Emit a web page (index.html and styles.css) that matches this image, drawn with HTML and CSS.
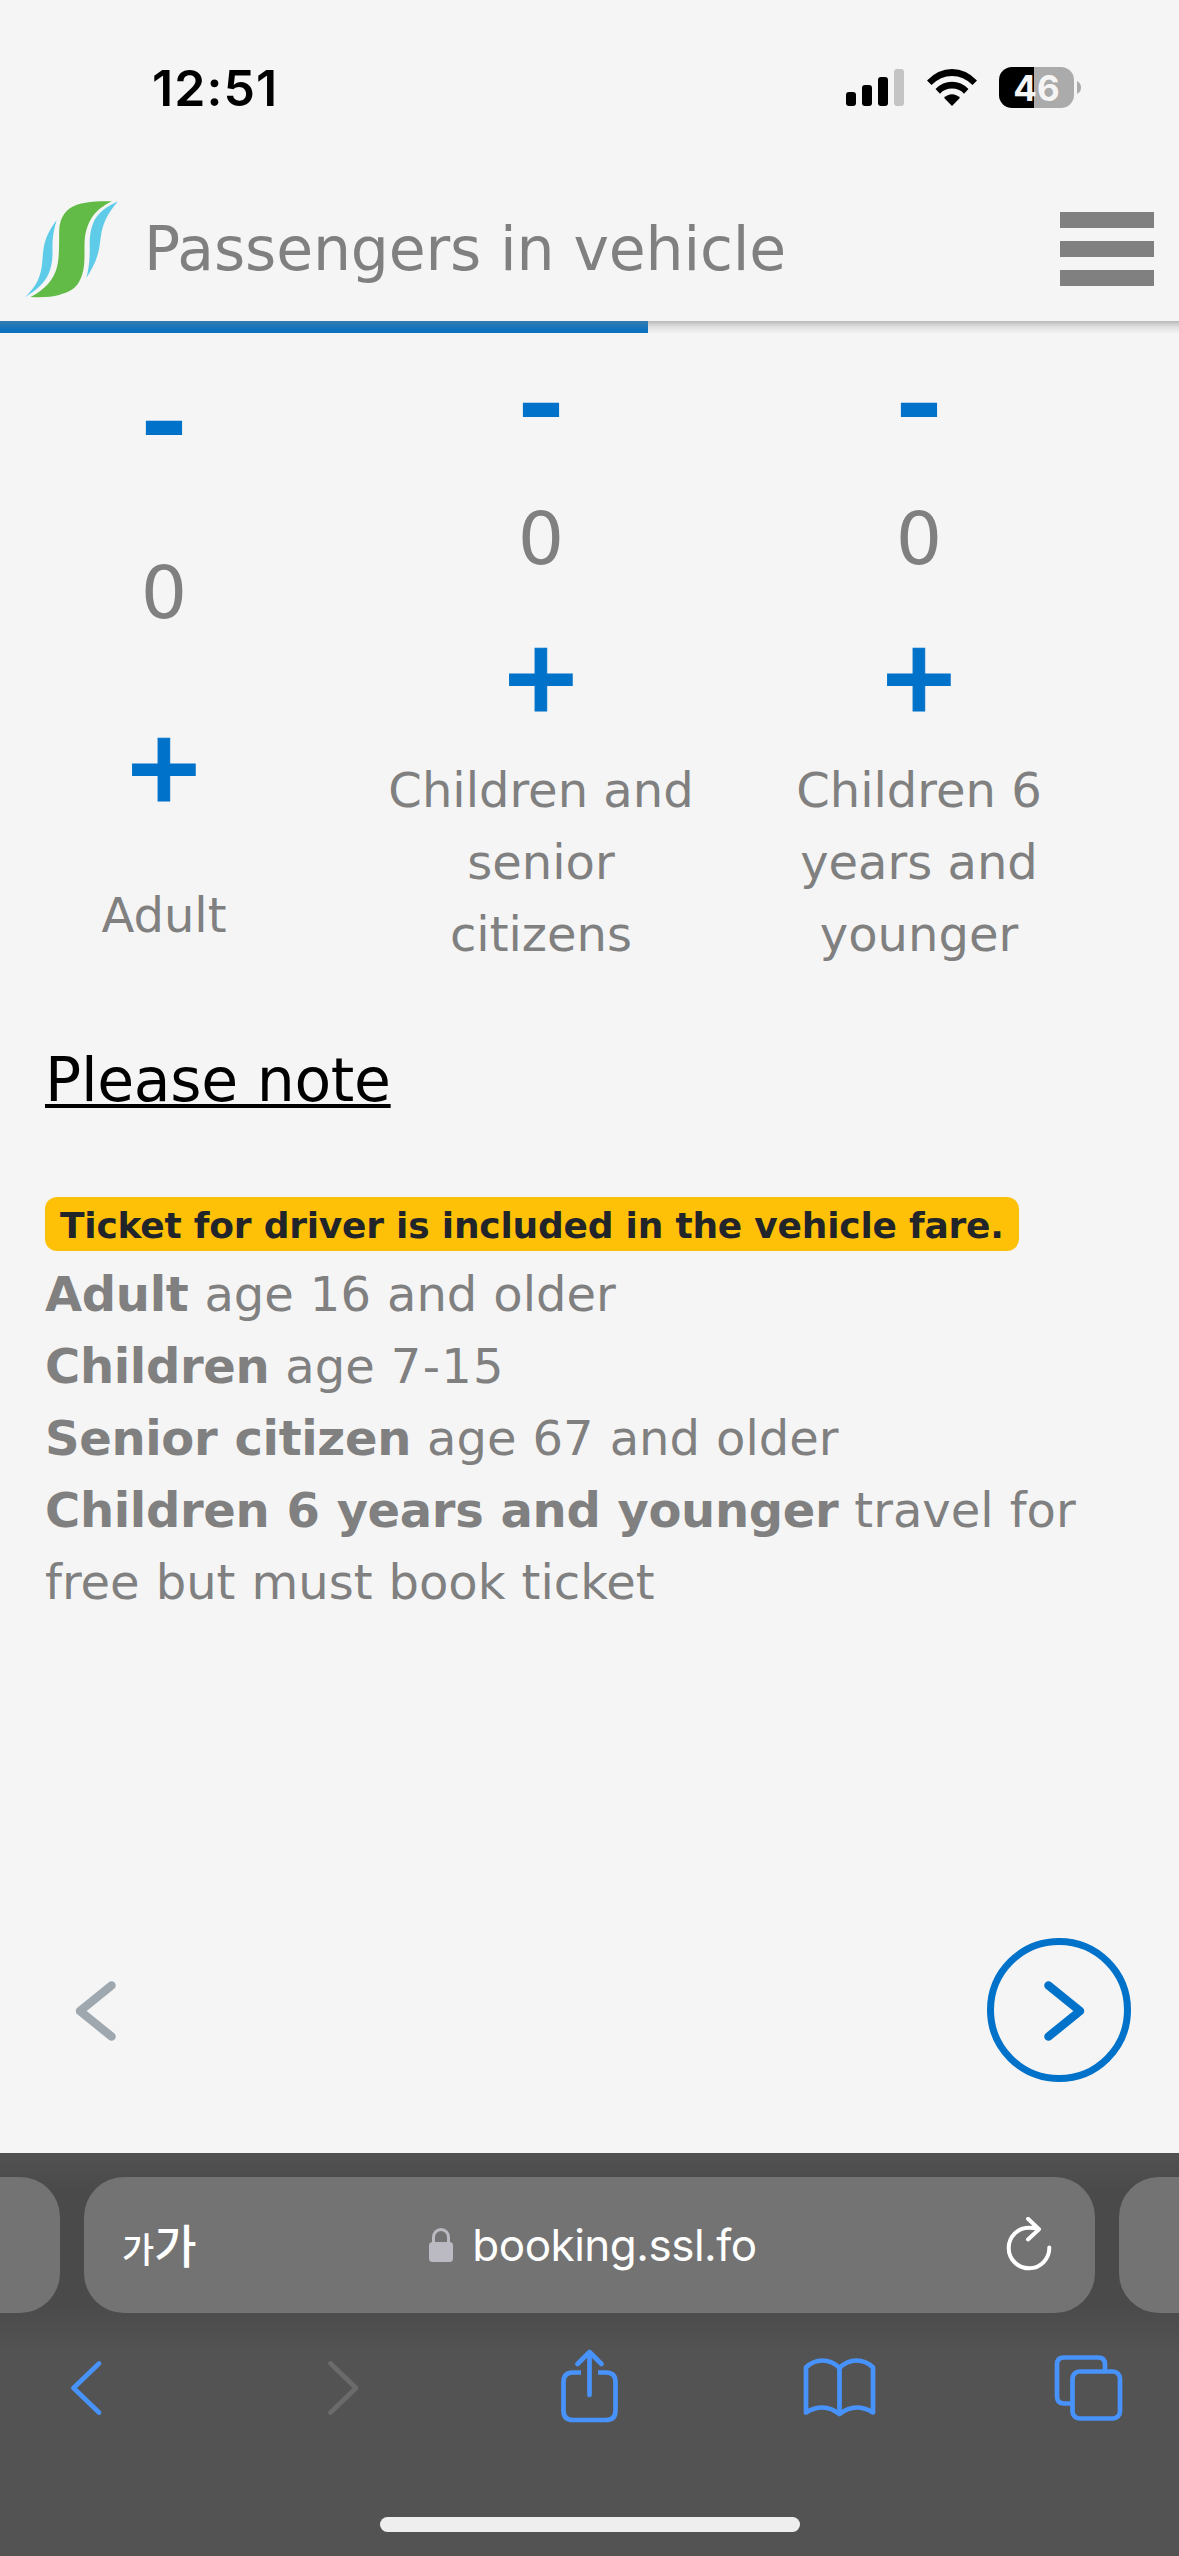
FILE: index.html
```html
<!DOCTYPE html>
<html lang="en">
<head>
<meta charset="utf-8">
<title>Passengers in vehicle</title>
<link rel="stylesheet" href="styles.css">
</head>
<body>
<div class="screen">
  <div class="status">
    <span class="clock">12:51</span>
    <div class="status-icons">
      <svg class="signal" viewBox="0 0 58 37"><rect x="0" y="23" width="10" height="14" rx="3"/><rect x="16" y="16" width="10" height="21" rx="3"/><rect x="32" y="8" width="10" height="29" rx="3"/><rect x="48" y="0" width="10" height="37" rx="3" fill="#c4c4c4"/></svg>
      <svg class="wifi" viewBox="0 0 50 37"><path d="M0 11.5Q11 0 25 0T50 11.5L45.500 16Q36.500 7 25 7T4.500 16Z"/><path d="M8.500 20Q15.500 12.700 25 12.700T41.500 20L37 24.700Q32 19.600 25 19.600T13 24.700Z"/><path d="M17 28.700Q20.500 25.200 25 25.200T33 28.700L25 37Z"/></svg>
      <div class="battery"><span>46</span></div>
      <svg class="nub" viewBox="0 0 4 13"><path d="M0 0Q4 2 4 6.500T0 13Z" fill="#ababab"/></svg>
    </div>
  </div>
  <header class="header">
    <svg class="logo" viewBox="0 0 94 97"><path fill="#62bb46" d="M87 .3C66 0 54 2 47 6C38 11 34.400 20 34.200 30C34 44 34.500 56 32 66C29 78 20 89 5.400 96C18 96.500 27 96 34 94C44 91 50 88 54 81C58 74 59.500 66 59.500 54C59.500 40 59 31 65.400 19C70 11 77 5 87 .3Z"/><path fill="#5ecbe9" d="M31.700 19C24 29 20 38 18.500 48C17 57 18 69 12.500 80C9 87 5 91 .4 96C12 89 20 81 23.500 73C27 65 27.700 58 27.500 48C27.300 36 29 28 31.700 19ZM93 .4C82 5 74 11 69.500 19C65.500 27 64.500 36 64.700 44C65 57 64 67 61.400 77C67 68 72 59 74 48C76 39 75 32 80 20C83 13 87 7 93 .4Z"/></svg>
    <h1 class="title">Passengers in vehicle</h1>
    <div class="menu"><i></i><i></i><i></i></div>
  </header>
  <div class="progress"><div class="progress-fill"></div></div>

  <main class="main">
    <section class="counters">
      <div class="counter counter-tall">
        <span class="minus">-</span><span class="count">0</span><span class="plus">+</span><span class="label">Adult</span>
      </div>
      <div class="counter">
        <span class="minus">-</span><span class="count">0</span><span class="plus">+</span><span class="label">Children and senior citizens</span>
      </div>
      <div class="counter">
        <span class="minus">-</span><span class="count">0</span><span class="plus">+</span><span class="label">Children 6 years and younger</span>
      </div>
    </section>

    <section class="notes">
      <h2 class="notes-title">Please note</h2>
      <div class="badge">Ticket for driver is included in the vehicle fare.</div>
      <p class="rules"><b>Adult</b> age 16 and older<br><b>Children</b> age <span class="range">7-15</span><br><b>Senior citizen</b> age 67 and older<br><b>Children 6 years and younger</b> travel for<br>free but must book ticket</p>
    </section>

    <nav class="steps">
      <svg class="prev" viewBox="0 0 41 60"><path d="M36.500 4.500L5 30L36.500 55.500"/></svg>
      <div class="next"><svg viewBox="0 0 41 60"><path d="M4.500 4.500L36 30L4.500 55.500"/></svg></div>
    </nav>
  </main>

  <footer class="browser">
    <div class="tabs-row">
      <div class="tab-edge tab-left"></div>
      <div class="address">
        <span class="reader"><small>가</small>가</span>
        <div class="url">
          <svg class="lock" viewBox="0 0 24 34"><rect y="14" width="24" height="20" rx="3.500" fill="#bbb9c2"/><path d="M4.500 16V9.500a7.500 8 0 0 1 15 0V16" fill="none" stroke="#bbb9c2" stroke-width="3"/></svg>
          <span>booking.ssl.fo</span>
        </div>
        <svg class="reload" viewBox="0 0 46 56"><path d="M43.300 30.500A20.300 20.300 0 1 1 23 10.700Q28 10.700 32.500 12M22 1.800L33 12.200L22 22.500"/></svg>
      </div>
      <div class="tab-edge tab-right"></div>
    </div>
    <div class="toolbar">
      <svg viewBox="0 0 80 80"><path d="M49 23.500L23.500 48L49 72.500"/></svg>
      <svg class="off" viewBox="0 0 80 80"><path d="M30.500 23.500L56 48L30.500 72.500"/></svg>
      <svg viewBox="0 0 80 80"><path stroke-linecap="butt" d="M31 32.500H23q-9.500 0-9.500 9.500V70.500q0 9.500 9.500 9.500H56q9.500 0 9.500-9.500V42q0-9.500-9.500-9.500H48"/><path d="M39.500 55V13M27.500 24L39.500 12L51.500 24"/></svg>
      <svg viewBox="0 0 80 80"><path d="M39.500 74V28M6 72.500V27.500Q13 20.500 22.500 20.500T39.500 28Q47 20.500 56.500 20.500T73 27.500V72.500Q65 67.500 56.500 67.500T39.500 74Q31 67.500 22.500 67.500T6 72.500Z"/></svg>
      <svg viewBox="0 0 80 80"><path d="M20 63.500H14q-7 0-7-7V24.500q0-7 7-7H48q7 0 7 7V31"/><rect x="22.500" y="31.500" width="47.500" height="47" rx="7"/></svg>
    </div>
    <div class="home"></div>
  </footer>
</div>
</body>
</html>
```
FILE: styles.css
```css
* { box-sizing: border-box; }
body { margin: 0; background: #f5f5f5; }
.screen {
  width: 1179px; height: 2556px; overflow: hidden;
  display: flex; flex-direction: column;
  font-family: "DejaVu Sans", Verdana, sans-serif;
  font-size: 48px; color: #808080; background: #f5f5f5;
}
svg { display: block; flex: none; }

.status { height: 176px; display: flex; justify-content: space-between; padding: 67px 98px 0 152px; }
.clock { font: 600 50px/42px Inter, sans-serif; color: #000; letter-spacing: 1.1px; }
.status-icons { display: flex; height: 41px; align-items: center; }
.signal { width: 58px; height: 37px; margin-right: 22.500px; }
.wifi { width: 50px; height: 37px; margin-right: 22.500px; }
.battery {
  width: 75px; height: 41px; border-radius: 13px;
  background: linear-gradient(90deg, #000 35px, #ababab 35px);
  font: 700 35px/42px Inter, sans-serif; color: #f5f5f5; text-align: center;
}
.nub { width: 4px; height: 13px; margin-left: 3px; }

.header { height: 145px; display: flex; align-items: flex-start; padding: 25px 25px 0; }
.logo { width: 94px; height: 97px; }
.title { margin: 12px 0 0 25px; font-size: 60px; line-height: 72px; font-weight: 400; letter-spacing: -0.15px; flex: 1; white-space: nowrap; }
.menu { width: 94px; display: flex; flex-direction: column; gap: 13px; padding-top: 11px; }
.menu i { height: 16px; background: #808080; }
.progress { height: 12px; background: linear-gradient(#b9bab9, #e0e0e0 50%, #f2f2f2); flex: none; }
.progress-fill { width: 648px; height: 12px; background: linear-gradient(#377cb0, #0f72be 70%, #0d71c0); }

.main { flex: 1; display: flex; flex-direction: column; min-height: 0; }
.counters { display: grid; grid-template-columns: 328px 426px 330px; height: 680px; padding-top: 19px; }
.counter { display: flex; flex-direction: column; align-items: center; }
.minus, .plus { font-weight: 700; color: #0072c9; line-height: 100px; font-size: 100px; height: 100px; }
.plus { -webkit-text-stroke: 1px #0072c9; }
.minus { font-size: 118px; transform: scaleY(0.84); transform-origin: 50% 65%; }
.count { font-size: 73px; line-height: 84px; margin: 45px 0 46px; }
.label { line-height: 72px; width: 330px; text-align: center; margin-top: 27px; }
.counter-tall { padding-top: 18px; }
.counter-tall .count { margin: 81px 0 82px; }
.counter-tall .label { margin-top: 62px; }

.notes { padding: 0 45px; }
.notes-title { margin: 22px 0 0; font-size: 60px; line-height: 90px; font-weight: 400; color: #000; text-decoration: underline; text-decoration-thickness: 4px; text-underline-offset: 3px; text-decoration-skip-ink: none; letter-spacing: -0.3px; }
.badge { width: 974px; height: 54px; margin-top: 72px; padding-left: 15px; border-radius: 12px; background: #ffc107; color: #212529; font-size: 36px; line-height: 57px; font-weight: 700; white-space: nowrap; letter-spacing: -0.22px; }
.rules { margin: 7px 0 0; line-height: 72px; word-spacing: 0.8px; }
.rules b { letter-spacing: -0.35px; }
.range { letter-spacing: 1.3px; }

.steps { margin-top: auto; height: 215px; display: flex; justify-content: space-between; padding: 0 48px 0 75px; }
.steps path { fill: none; stroke-width: 8.500; stroke-linecap: round; stroke-linejoin: round; }
.prev { width: 41px; height: 60px; margin-top: 43px; stroke: #9fa8af; }
.next { width: 144px; height: 144px; border: 7px solid #0072c9; border-radius: 50%; padding: 36px 0 0 50px; }
.next svg { width: 41px; height: 60px; stroke: #0072c9; }

.browser { height: 403px; background: linear-gradient(#515151, #4a4a4a 40px, #4a4a4a 150px, #535353 200px); }
.tabs-row { display: flex; gap: 24px; padding-top: 24px; }
.tab-edge { width: 60px; height: 136px; background: #737373; }
.tab-left { border-radius: 0 40px 40px 0; }
.tab-right { border-radius: 40px 0 0 40px; }
.address { width: 1011px; height: 136px; border-radius: 40px; background: #737373; color: #fff; display: flex; align-items: center; justify-content: space-between; padding: 0 43px 0 38px; }
.reader { font: 500 46px/60px "Noto Sans CJK KR", sans-serif; width: 90px; white-space: nowrap; }
.reader small { font-size: 35px; }
.url { display: flex; align-items: center; margin-right: 32px; font: 400 44px/60px Inter, sans-serif; letter-spacing: -0.5px; }
.lock { width: 24px; height: 34px; margin-right: 19px; }
.reload { width: 46px; height: 56px; fill: none; stroke: #fff; stroke-width: 4; stroke-linecap: round; stroke-linejoin: round; }
.toolbar { display: flex; justify-content: space-between; padding: 27px 49px 0 50px; }
.toolbar svg { width: 80px; height: 80px; overflow: visible; fill: none; stroke: #4893fb; stroke-width: 4.700; stroke-linecap: round; stroke-linejoin: round; }
.toolbar .off { stroke: #6b6b6b; }
.home { width: 420px; height: 15px; border-radius: 8px; background: #eee; margin: 97px auto 0; }
```
